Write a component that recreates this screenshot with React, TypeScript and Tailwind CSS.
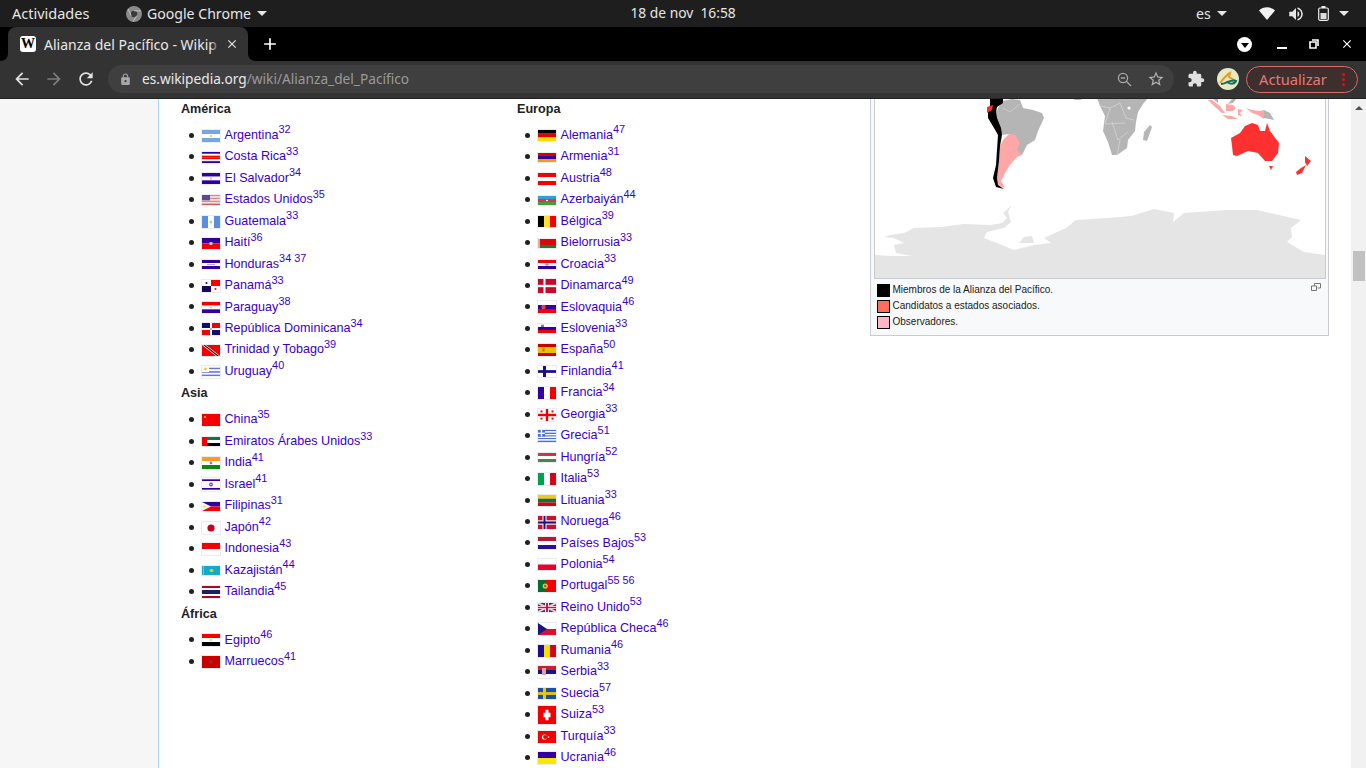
import React from "react";
import { MdArrowBack, MdArrowForward, MdRefresh, MdLock, MdExtension, MdClose, MdAdd, MdVolumeUp, MdStarBorder } from "react-icons/md";

const B = "#3300a0";
const R = "#f40000";
const h = (...c: string[]) => c.map((k, i) => <rect key={i} x={0} y={(i * 12) / c.length} width={18} height={12 / c.length + 0.02} fill={k} />);
const v = (...c: string[]) => c.map((k, i) => <rect key={i} y={0} x={(i * 18) / c.length} height={12} width={18 / c.length + 0.02} fill={k} />);
const dot = (x: number, y: number, r: number, f: string) => <circle cx={x} cy={y} r={r} fill={f} />;
const W = "#ffffff";

type F = [string, string, number, React.ReactNode];

const america: F[] = [
  ["Argentina", "32", 12, <>{h("#74a6df", W, "#74a6df")}{dot(9, 6, 1, "#e8c050")}</>],
  ["Costa Rica", "33", 11, <>{h(B, W, R, R, W, B)}</>],
  ["El Salvador", "34", 11, <>{h(B, W, B)}{dot(9, 6, 1, "#8fc89a")}</>],
  ["Estados Unidos", "35", 10, <>{h("#d98a8a", "#f4dede", "#d98a8a", "#f4dede", "#d98a8a", "#f4dede", "#c95f5f")}<rect width={8} height={6.4} fill="#5a4a92" /></>],
  ["Guatemala", "33", 12, <>{v("#5b8fdc", W, "#5b8fdc")}{dot(9, 6, 1.5, "#b8d0a0")}</>],
  ["Haití", "36", 11, <>{h(B, R)}<rect x={7.5} y={4.5} width={3} height={3} fill="#d8c8c8" /></>],
  ["Honduras", "34 37", 9, <>{h(B, W, B)}<rect x={5} y={5.4} width={8} height={1} fill="#9090d0" /></>],
  ["Panamá", "33", 12, <>{v(W, W)}<rect x={9} width={9} height={6} fill={R} /><rect y={6} width={9} height={6} fill="#16095c" />{dot(4.5, 3, 1, "#16095c")}{dot(13.5, 9, 1, R)}</>],
  ["Paraguay", "38", 11, <>{h(R, W, B)}{dot(9, 6, 0.8, "#c0b090")}</>],
  ["República Dominicana", "34", 12, <><rect width={18} height={12} fill={W} /><rect width={8} height={5} fill="#160c70" /><rect x={10} width={8} height={5} fill={R} /><rect y={7} width={8} height={5} fill={R} /><rect x={10} y={7} width={8} height={5} fill="#160c70" />{dot(9, 6, 1, "#90a090")}</>],
  ["Trinidad y Tobago", "39", 11, <><rect width={18} height={12} fill={R} /><polygon points="0,0 4,0 18,12 14,12" fill={W} /><polygon points="1.2,0 3,0 17,12 15,12" fill="#111" /></>],
  ["Uruguay", "40", 12, <>{h(W, "#6878cc", W, "#6878cc", W, "#6878cc", W)}<rect width={7} height={6} fill={W} />{dot(3.5, 3, 1.4, "#f0c840")}</>],
];
const asia: F[] = [
  ["China", "35", 12, <><rect width={18} height={12} fill={R} />{dot(3, 3, 1, "#f0d000")}</>],
  ["Emiratos Árabes Unidos", "33", 9, <>{h("#00803a", W, "#000")}<rect width={5} height={12} fill={R} /></>],
  ["India", "41", 12, <>{h("#ff9a20", W, "#0a8a10")}{dot(9, 6, 1.4, "#8080c0")}</>],
  ["Israel", "41", 13, <><rect width={18} height={12} fill={W} /><rect y={1.2} width={18} height={1.6} fill={B} /><rect y={9.2} width={18} height={1.6} fill={B} />{dot(9, 6, 1.8, "#5a3cc0")}{dot(9, 6, 0.7, W)}</>],
  ["Filipinas", "31", 9, <>{h(B, R)}<polygon points="0,0 9,6 0,12" fill={W} />{dot(2.5, 6, 1.2, "#f0d000")}</>],
  ["Japón", "42", 12, <><rect width={18} height={12} fill={W} />{dot(9, 6, 3.6, "#c8001e")}</>],
  ["Indonesia", "43", 12, <>{h(R, W)}</>],
  ["Kazajistán", "44", 9, <><rect width={18} height={12} fill="#14aac8" /><rect x={1} width={0.8} height={12} fill="#b8c860" />{dot(9.5, 6, 2, "#d8d040")}</>],
  ["Tailandia", "45", 12, <>{h("#a80828", W, "#241a60", "#241a60", W, "#a80828")}</>],
];
const africa: F[] = [
  ["Egipto", "46", 12, <>{h(R, W, "#000")}{dot(9, 6, 1.3, "#e8d8a0")}</>],
  ["Marruecos", "41", 12, <><rect width={18} height={12} fill="#c80000" />{dot(9, 6, 1.7, "#803830")}</>],
];
const europa: F[] = [
  ["Alemania", "47", 11, <>{h("#000", "#e00000", "#ffd800")}</>],
  ["Armenia", "31", 9, <>{h("#d80000", B, "#f0a000")}</>],
  ["Austria", "48", 12, <>{h(R, W, R)}</>],
  ["Azerbaiyán", "44", 9, <>{h("#30a0d8", "#e83040", "#40a040")}{dot(9, 6, 1, W)}</>],
  ["Bélgica", "39", 11, <>{v("#000", "#ffe030", R)}</>],
  ["Bielorrusia", "33", 9, <><rect width={18} height={8} fill="#d80808" /><rect y={8} width={18} height={4} fill="#108030" /><rect width={2} height={12} fill="#e8a8a8" /></>],
  ["Croacia", "33", 9, <>{h(R, W, B)}{dot(9, 6, 1.8, "#d08888")}</>],
  ["Dinamarca", "49", 14, <><rect width={18} height={12} fill="#c80828" /><rect x={5.5} width={2} height={12} fill={W} /><rect y={5} width={18} height={2} fill={W} /></>],
  ["Eslovaquia", "46", 12, <>{h(W, B, R)}{dot(5.5, 6, 2.2, "#e84050")}</>],
  ["Eslovenia", "33", 9, <>{h(W, B, R)}<rect x={3} y={1} width={3} height={3} fill="#6080d0" /></>],
  ["España", "50", 12, <><rect width={18} height={12} fill="#f0c000" /><rect width={18} height={3} fill="#c80000" /><rect y={9} width={18} height={3} fill="#c80000" /><rect x={4.5} y={4.5} width={2} height={3} fill="#c06020" /></>],
  ["Finlandia", "41", 11, <><rect width={18} height={12} fill={W} /><rect x={5} width={3} height={12} fill="#1a1088" /><rect y={4.5} width={18} height={3} fill="#1a1088" /></>],
  ["Francia", "34", 12, <>{v(B, W, R)}</>],
  ["Georgia", "33", 12, <><rect width={18} height={12} fill={W} /><rect x={7.8} width={2.4} height={12} fill={R} /><rect y={4.8} width={18} height={2.4} fill={R} />{[[3.5, 2.4], [14.5, 2.4], [3.5, 9.6], [14.5, 9.6]].map(([x, y], i) => <rect key={i} x={x - 1} y={y - 1} width={2} height={2} fill={R} />)}</>],
  ["Grecia", "51", 12, <>{h("#4a70c8", W, "#4a70c8", W, "#4a70c8", W, "#4a70c8", W, "#4a70c8")}<rect width={7} height={6.6} fill="#4a70c8" /><rect x={2.8} width={1.4} height={6.6} fill={W} /><rect y={2.6} width={7} height={1.4} fill={W} /></>],
  ["Hungría", "52", 9, <>{h("#d83040", W, "#508050")}</>],
  ["Italia", "53", 12, <>{v("#00a050", W, "#d00818")}</>],
  ["Lituania", "33", 11, <>{h("#f0c820", "#107040", "#c80818")}</>],
  ["Noruega", "46", 13, <><rect width={18} height={12} fill="#c81030" /><rect x={4.5} width={4} height={12} fill={W} /><rect y={4} width={18} height={4} fill={W} /><rect x={5.5} width={2} height={12} fill="#1c1480" /><rect y={5} width={18} height={2} fill="#1c1480" /></>],
  ["Países Bajos", "53", 12, <>{h("#b81830", W, "#2a1098")}</>],
  ["Polonia", "54", 11, <>{h(W, "#e80030")}</>],
  ["Portugal", "55 56", 12, <><rect width={18} height={12} fill={R} /><rect width={7.2} height={12} fill="#007030" />{dot(7.2, 6, 2.6, "#e8c040")}{dot(7.2, 6, 1.2, "#c84040")}</>],
  ["Reino Unido", "53", 9, <><rect width={18} height={12} fill="#383088" /><polygon points="0,0 2,0 18,10.5 18,12 16,12 0,1.5" fill="#e8d8e0" /><polygon points="18,0 16,0 0,10.5 0,12 2,12 18,1.5" fill="#e8d8e0" /><rect x={7} width={4} height={12} fill={W} /><rect y={4} width={18} height={4} fill={W} /><rect x={8} width={2} height={12} fill="#d81030" /><rect y={5} width={18} height={2} fill="#d81030" /></>],
  ["República Checa", "46", 12, <>{h(W, "#d81030")}<polygon points="0,0 9,6 0,12" fill="#1c1480" /></>],
  ["Rumania", "46", 12, <>{v("#220a90", "#f8e000", "#d00818")}</>],
  ["Serbia", "33", 12, <>{h("#c82030", "#1c1480", W)}<rect x={4} y={2} width={4} height={7} fill="#e0a0a0" /></>],
  ["Suecia", "57", 11, <><rect width={18} height={12} fill="#1c50a8" /><rect x={5} width={3} height={12} fill="#f0c800" /><rect y={4.5} width={18} height={3} fill="#f0c800" /></>],
  ["Suiza", "53", 18, <><rect width={18} height={12} fill={R} /><rect x={7.5} y={2.5} width={3} height={7} fill={W} /><rect x={5.5} y={4.5} width={7} height={3} fill={W} /></>],
  ["Turquía", "33", 12, <><rect width={18} height={12} fill={R} />{dot(6.5, 6, 2.6, W)}{dot(7.2, 6, 2.1, R)}{dot(10.5, 6, 0.8, W)}</>],
  ["Ucrania", "46", 12, <>{h(B, "#f8e800")}</>],
];

function Flag({ height, children }: { height: number; children: React.ReactNode }) {
  return (
    <span className="ml-[7px] mt-[1px] flex-none border border-[#eaecf0] leading-[0] block">
      <svg width={18} height={height} viewBox="0 0 18 12" preserveAspectRatio="none" className="block">{children}</svg>
    </span>
  );
}

function CountryList({ items, className }: { items: F[]; className?: string }) {
  return (
    <ul className={"ml-[8px] " + (className ?? "")}>
      {items.map(([name, sup, height, art]) => (
        <li key={name} className="flex items-center h-[21.46px] whitespace-nowrap">
          <span className="w-[5px] h-[5px] flex-none rounded-full bg-[#202122]" />
          <Flag height={height}>{art}</Flag>
          <span className="ml-[3.5px]">
            <a className="text-[#3a00c4]">{name}</a>
            <sup className="text-[10.9px] text-[#3a00c4]">{sup}</sup>
          </span>
        </li>
      ))}
    </ul>
  );
}

function Head({ children }: { children: React.ReactNode }) {
  return <h4 className="font-bold text-[#202122] text-[12.6px] leading-[20.55px]">{children}</h4>;
}

function WorldMap() {
  return (
    <svg width={450} height={179} viewBox="875 99 450 179" className="block bg-white">
      <polygon fill="#e5e5e5" points="875,255 891,256 912,256 896,253 894,245 904,243 894,238 884,237 890,235 904,233 914,228 941,227 964,224 991,225 1002,223 1007,218 1003,213 1012,205 1008,212 1011,222 1004,228 987,232 984,238 997,243 1014,250 1034,245 1051,243 1044,238 1066,228 1076,220 1107,218 1131,216 1154,209 1174,213 1173,222 1184,213 1227,210 1257,210 1301,220 1291,228 1292,237 1287,242 1304,252 1325,255 1325,278 875,278" />
      <polygon fill="#e5e5e5" points="1019,243 1024,237 1032,236 1034,243" />
      <polygon fill="#b5b5b5" points="1002,101 1012,99 1020,100 1023,108 1033,110 1042,113 1044,118 1038,131 1035,140 1027,145 1022,155 1015,150 1010,134 1001,135 998,125 995,120 996,112" />
      <polygon fill="#ffa6a6" points="1009,134 1015,135 1020,143 1017,150 1022,155 1017,157 1010,165 1005,173 1001,181 1005,188 998,185 997,178 999,161 1000,146 1003,140" />
      <polygon fill="#000" points="990,98 1003,98 1003,103 997,107 996,112 997,118 1001,128 1002,135 1000,146 999,161 997,178 998,185 1004,189 996,187 993,178 996,165 997,150 998,135 994,128 988,118 988,113 990,105" />
      <polygon fill="#ff3030" points="987,107 993,105 992,110 987,113" />
      <polygon fill="#b5b5b5" points="1097,98 1148,98 1143,104 1138,112 1136,122 1135,131 1128,140 1127,148 1117,155 1112,155 1108,142 1103,131 1105,116 1100,106" />
      <polygon fill="#b5b5b5" points="1150,125 1152,127 1147,141 1143,140 1144,132" />
      <circle cx={1129} cy={108} r={1.6} fill="#fff" />
      <path d="M1100 106L1110 108L1120 103M1110 108L1105 124L1125 123M1112 122L1118 140L1128 132M1120 103L1126 118L1134 120M1120 140L1117 155" stroke="#d8d8d8" strokeWidth={0.7} fill="none" />
      <path d="M1003 108L1010 112M1010 112L1020 104" stroke="#d8d8d8" strokeWidth={0.6} fill="none" />
      <polygon fill="#b5b5b5" points="1072,98 1084,98 1080,100 1075,100" />
      <polygon fill="#ffa6a6" points="1208,100 1212,100 1220,106 1225,113 1222,113 1214,106" />
      <polygon fill="#ffa6a6" points="1222,115 1232,116 1238,119 1228,119" />
      <polygon fill="#ffa6a6" points="1226,104 1233,105 1236,108 1233,111 1226,111" />
      <polygon fill="#ffa6a6" points="1238,109 1243,110 1240,113 1242,117 1238,115" />
      <polygon fill="#ffa6a6" points="1246,108 1252,110 1260,111 1264,110 1264,119 1258,115 1252,113" />
      <polygon fill="#b5b5b5" points="1264,110 1270,113 1274,120 1264,118" />
      <polygon fill="#b5b5b5" points="1228,104 1232,99 1237,98 1233,103" />
      <polygon fill="#b5b5b5" points="1212,98 1218,98 1218,103" />
      <polygon fill="#ff3030" points="1231,138 1240,133 1245,126 1252,123 1258,125 1260,131 1265,131 1267,123 1270,131 1279,143 1278,153 1272,161 1265,161 1258,153 1248,151 1237,156 1233,155 1232,146" />
      <polygon fill="#ff3030" points="1269,166 1273,166 1271,170" />
      <polygon fill="#ff3030" points="1305,156 1311,161 1307,166 1305,162" />
      <polygon fill="#ff3030" points="1306,165 1302,173 1297,175 1296,172 1301,168" />
    </svg>
  );
}

function Legend({ color, children }: { color: string; children: string }) {
  return (
    <div className="flex items-center h-[16px]">
      <span className="w-[13px] h-[13px] border border-black flex-none" style={{ background: color }} />
      <span className="ml-[2.5px] text-[10px] text-[#202122]">{children}</span>
    </div>
  );
}

export default function App() {
  const ui = { fontFamily: '"Noto Sans", sans-serif' };
  return (
    <div className="w-[1366px] h-[768px] overflow-hidden flex flex-col bg-white" style={{ fontFamily: '"Liberation Sans", Arial, sans-serif', fontSize: "12.6px" }}>
      <div className="h-[27px] flex-none bg-[#1e1e1e] flex items-center text-[#e6e6e6] text-[14.1px] relative" style={ui}>
        <span className="ml-[12px] w-[114px] text-[14.5px]">Actividades</span>
        <svg width={16} height={16} viewBox="0 0 16 16" className="flex-none">
          <circle cx={8} cy={8} r={8} fill="#8a8a8a" />
          <circle cx={8} cy={8} r={3.2} fill="#3a3a3a" />
          <path d="M8 4.8H15M5.2 9.6L2 3M10.8 9.6L7 15.5" stroke="#c4c4c4" strokeWidth={1} />
        </svg>
        <span className="ml-[5px]">Google Chrome</span>
        <span className="ml-[6px] w-0 h-0 border-x-[5px] border-x-transparent border-t-[5px] border-t-[#e6e6e6]" />
        <span className="ml-[363px] w-[106px] whitespace-pre text-center text-[13.8px]">18 de nov  16:58</span>
        <span className="ml-[460px]">es</span>
        <span className="ml-[6px] w-0 h-0 border-x-[5px] border-x-transparent border-t-[5px] border-t-[#e6e6e6]" />
        <svg width={16} height={14} viewBox="0 0 16 14" className="ml-[32px] flex-none"><path d="M0 3.5C4.5 -0.8 11.5 -0.8 16 3.5L8 13Z" fill="#f2f2f2" /></svg>
        <MdVolumeUp className="ml-[12px] flex-none text-[#e6e6e6]" size={18} />
        <svg width={11} height={15} viewBox="0 0 11 15" className="ml-[13px] flex-none"><rect x={0.7} y={2} width={9.6} height={12.3} rx={1.2} fill="none" stroke="#eee" strokeWidth={1.2} /><rect x={3.5} y={0} width={4} height={2} fill="#eee" /><rect x={2.5} y={7} width={6} height={6} fill="#ddd" /></svg>
        <span className="ml-[10px] w-0 h-0 border-x-[5px] border-x-transparent border-t-[5px] border-t-[#e6e6e6]" />
      </div>

      <div className="h-[34px] flex-none bg-black flex items-center text-white" style={ui}>
        <div className="relative flex-none ml-[8px] w-[240px] h-[34px] bg-[#333333] rounded-t-[8px] flex items-center self-end">
          <svg width={8} height={8} viewBox="0 0 8 8" className="absolute left-[-8px] bottom-0"><path d="M8 0V8H0C5 8 8 5 8 0Z" fill="#333333" /></svg>
          <svg width={8} height={8} viewBox="0 0 8 8" className="absolute right-[-8px] bottom-0"><path d="M0 0V8H8C3 8 0 5 0 0Z" fill="#333333" /></svg>
          <span className="ml-[12px] flex-none w-[16px] h-[16px] bg-white rounded-[3px] text-black text-[14px] leading-[16px] text-center font-bold" style={{ fontFamily: '"Liberation Serif", serif' }}>W</span>
          <span className="ml-[8px] flex-none w-[176px] whitespace-nowrap text-[14px] text-[#e8e8e8] relative">
            Alianza del Pacífico - Wikip
            <span className="absolute right-0 top-0 bottom-0 w-[10px] bg-gradient-to-r from-transparent to-[#333333]" />
          </span>
          <MdClose className="ml-[5px] flex-none text-[#e8e8e8]" size={14} />
        </div>
        <MdAdd className="ml-[12px] flex-none" size={20} />
        <span className="ml-[957px] w-[15px] h-[15px] bg-white rounded-full flex items-center justify-center flex-none"><span className="w-0 h-0 border-x-[4px] border-x-transparent border-t-[5px] border-t-black mt-[2px]" /></span>
        <span className="ml-[25px] w-[10px] h-[2px] bg-white mt-[8px] flex-none" />
        <svg width={10} height={10} viewBox="0 0 10 10" className="ml-[22px] flex-none"><path d="M3 1H9V7M1 3H7V9H1Z" fill="none" stroke="#fff" strokeWidth={1.6} /></svg>
        <MdClose className="ml-[21px] flex-none" size={14} />
      </div>

      <div className="h-[38px] pb-[1px] flex-none bg-[#333333] flex items-center border-b border-[#222222]" style={ui}>
        <MdArrowBack className="ml-[12px] flex-none text-[#e4e4e4]" size={20} />
        <MdArrowForward className="ml-[12px] flex-none text-[#7c7c7c]" size={20} />
        <MdRefresh className="ml-[12px] flex-none text-[#e4e4e4]" size={20} />
        <div className="ml-[12px] w-[1066px] h-[28px] flex-none rounded-full bg-[#3f3f3f] flex items-center">
          <MdLock className="ml-[11px] flex-none text-[#a8a8a8]" size={13} />
          <span className="ml-[10px] text-[13.7px] whitespace-nowrap"><span className="text-[#e8e8e8]">es.wikipedia.org</span><span className="text-[#9a9a9a]">/wiki/Alianza_del_Pacífico</span></span>
          <svg width={15} height={15} viewBox="0 0 15 15" className="ml-auto flex-none"><circle cx={6} cy={6} r={4.6} fill="none" stroke="#a8a8a8" strokeWidth={1.3} /><path d="M9.5 9.5L14 14M3.8 6H8.2" stroke="#a8a8a8" strokeWidth={1.3} /></svg>
          <MdStarBorder className="ml-[15px] mr-[9px] flex-none text-[#b4b4b4]" size={18} />
        </div>
        <MdExtension className="ml-[13px] flex-none text-[#e0e0e0]" size={18} />
        <svg width={22} height={22} viewBox="0 0 22 22" className="ml-[12px] flex-none">
          <circle cx={11} cy={11} r={11} fill="#e6e8c6" />
          <path d="M3 15C7 10 11 6 13 5L12 9L19 13" fill="none" stroke="#e0a020" strokeWidth={2} />
          <path d="M4 16C9 16 13 11 19 13C17 17 11 16 10 13" fill="none" stroke="#157060" strokeWidth={2} />
        </svg>
        <div className="ml-[7px] w-[112px] h-[27px] flex-none rounded-full border border-[#d86c66] bg-[#3e2e2e] flex items-center">
          <span className="ml-[12px] text-[14.7px] text-[#e57a72]">Actualizar</span>
          <span className="ml-auto mr-[12px] flex flex-col gap-[2px]">
            <i className="block w-[3px] h-[3px] rounded-full bg-[#e01010]" />
            <i className="block w-[3px] h-[3px] rounded-full bg-[#e01010]" />
            <i className="block w-[3px] h-[3px] rounded-full bg-[#e01010]" />
          </span>
        </div>
      </div>

      <div className="flex-1 min-h-0 flex overflow-hidden">
        <div className="w-[158px] flex-none bg-[#f6f6f6]" />
        <div className="flex-1 min-w-0 bg-white border-l border-[#a7d7f9] flex pl-[22px]">
          <div className="w-[336px] flex-none">
            <Head>América</Head>
            <CountryList items={america} className="mt-[5.1px]" />
            <div className="mt-[0.7px]"><Head>Asia</Head></div>
            <CountryList items={asia} className="mt-[5.9px]" />
            <div className="mt-[1.4px]"><Head>África</Head></div>
            <CountryList items={africa} className="mt-[5.05px]" />
          </div>
          <div className="w-[353px] flex-none">
            <Head>Europa</Head>
            <CountryList items={europa} className="mt-[5.1px]" />
          </div>
          <div className="w-[459px] h-[237px] flex-none border border-t-0 border-[#c8ccd1] bg-[#f8f9fa] px-[3px]">
            <div className="w-[452px] border border-t-0 border-[#c8ccd1]"><WorldMap /></div>
            <div className="relative pt-[3px] pl-[3px] leading-none">
              <Legend color="#000000">Miembros de la Alianza del Pacífico.</Legend>
              <Legend color="#ff6d5c">Candidatos a estados asociados.</Legend>
              <Legend color="#ffb6c6">Observadores.</Legend>
              <svg width={10} height={8} viewBox="0 0 10 8" className="absolute right-[4px] top-[4px]"><path d="M3.5 2.5V.5H9.5V5H6.5M.5 3H5.5V7.5H.5Z" fill="none" stroke="#666" strokeWidth={0.9} /></svg>
            </div>
          </div>
        </div>
        <div className="w-[15px] flex-none bg-[#f1f1f1] flex flex-col items-center">
          <span className="mt-[7px] w-0 h-0 border-x-[4px] border-x-transparent border-b-[4px] border-b-[#505050]" />
          <span className="mt-[141px] w-[12px] h-[30px] bg-[#c1c1c1]" />
        </div>
      </div>
    </div>
  );
}
